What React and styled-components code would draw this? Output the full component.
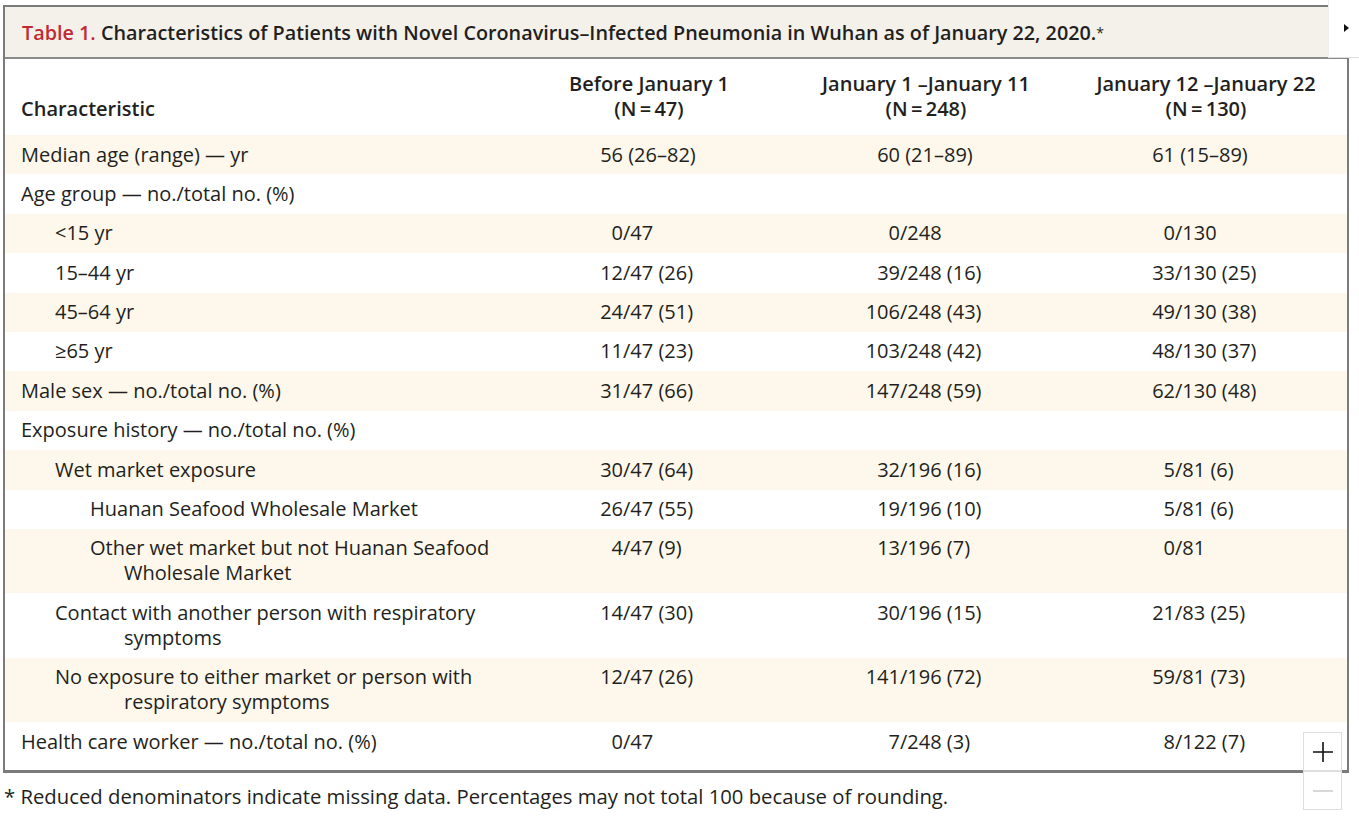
import React from "react";
import styled, { createGlobalStyle } from "styled-components";

const Global = createGlobalStyle`
  html, body { margin: 0; padding: 0; background: #ffffff; }
  body { font-family: "Open Sans", "Noto Sans", sans-serif; color: #231f20; }
`;

const Page = styled.div`
  position: relative;
  width: 1359px;
  height: 818px;
  overflow: hidden;
  padding: 5px 0 0 3px;
  box-sizing: border-box;
`;

const Frame = styled.div`
  width: 1346px;
  box-sizing: border-box;
  border: 2px solid #7b7b7b;
  border-bottom-width: 3px;
  background: #fff;
  padding-bottom: 9px;
`;

const TitleBar = styled.div`
  height: 50px;
  background: #f4f1eb;
  border-bottom: 2px solid #8a8a8a;
  display: flex;
  align-items: center;
  padding-left: 17px;
  font-size: 19.8px;
  font-weight: 600;
  white-space: nowrap;
`;

const Red = styled.span`
  color: #c22a32;
`;

const Star = styled.span`
  font-size: 14px;
  vertical-align: 5px;
  font-weight: 400;
`;

const Grid = styled.div`
  display: grid;
  grid-template-columns: 512px 264px 290px 270px 1fr;
  font-size: 20px;
  line-height: 25px;
`;

const Row = styled.div`
  display: contents;
`;

const Cell = styled.div`
  background: ${(p) => (p.$stripe ? "#fdf8eb" : "#ffffff")};
  padding: 6.5px 0 7.9px;
  white-space: nowrap;
`;

const HeadCell = styled.div`
  padding: 12px 0 14px;
  display: flex;
  flex-direction: column;
  justify-content: flex-end;
  align-items: ${(p) => (p.$left ? "flex-start" : "center")};
  padding-left: ${(p) => (p.$left ? "16px" : "0")};
  font-weight: 600;
  white-space: nowrap;
`;

const Label = styled(Cell)`
  padding-left: ${(p) => p.$hang}px;
  text-indent: ${(p) => p.$indent - p.$hang}px;
`;

const ValueCell = styled(Cell)`
  display: flex;
  align-items: flex-start;
  padding-left: ${(p) => p.$lead}px;
`;

const Num = styled.span`
  width: 40px;
  text-align: right;
  flex: none;
`;

const Rest = styled.span`
  white-space: pre;
`;

const Footnote = styled.div`
  margin-top: 11px;
  padding-left: 1px;
  font-size: 20.3px;
  line-height: 25px;
  white-space: nowrap;
`;

const SidePanel = styled.div`
  position: absolute;
  top: 0;
  right: 0;
  width: 30px;
  height: 57px;
  background: #fff;
  border-bottom: 1px solid #dcdcdc;
  border-left: 1px solid #f0f0f0;
`;

const Arrow = styled.div`
  position: absolute;
  left: 15px;
  top: 24px;
  width: 0;
  height: 0;
  border-top: 4px solid transparent;
  border-bottom: 4px solid transparent;
  border-left: 5px solid #111;
`;

const ZoomBox = styled.div`
  position: absolute;
  left: 1303px;
  top: ${(p) => p.$top}px;
  width: 39px;
  height: 39px;
  box-sizing: border-box;
  background: #fff;
  border: 1px solid #dedede;
  display: flex;
  align-items: center;
  justify-content: center;
`;

const leads = [66, 79, 64];

const rows = [
  { label: ["Median age (range) — yr"], lvl: 0, vals: ["56 (26–82)", "60 (21–89)", "61 (15–89)"] },
  { label: ["Age group — no./total no. (%)"], lvl: 0, vals: ["", "", ""] },
  { label: ["<15 yr"], lvl: 1, vals: ["0/47", "0/248", "0/130"] },
  { label: ["15–44 yr"], lvl: 1, vals: ["12/47 (26)", "39/248 (16)", "33/130 (25)"] },
  { label: ["45–64 yr"], lvl: 1, vals: ["24/47 (51)", "106/248 (43)", "49/130 (38)"] },
  { label: ["≥65 yr"], lvl: 1, vals: ["11/47 (23)", "103/248 (42)", "48/130 (37)"] },
  { label: ["Male sex — no./total no. (%)"], lvl: 0, vals: ["31/47 (66)", "147/248 (59)", "62/130 (48)"] },
  { label: ["Exposure history — no./total no. (%)"], lvl: 0, vals: ["", "", ""] },
  { label: ["Wet market exposure"], lvl: 1, vals: ["30/47 (64)", "32/196 (16)", "5/81 (6)"] },
  { label: ["Huanan Seafood Wholesale Market"], lvl: 2, vals: ["26/47 (55)", "19/196 (10)", "5/81 (6)"] },
  { label: ["Other wet market but not Huanan Seafood", "Wholesale Market"], lvl: 2, vals: ["4/47 (9)", "13/196 (7)", "0/81"] },
  { label: ["Contact with another person with respiratory", "symptoms"], lvl: 1, vals: ["14/47 (30)", "30/196 (15)", "21/83 (25)"] },
  { label: ["No exposure to either market or person with", "respiratory symptoms"], lvl: 1, vals: ["12/47 (26)", "141/196 (72)", "59/81 (73)"] },
  { label: ["Health care worker — no./total no. (%)"], lvl: 0, vals: ["0/47", "7/248 (3)", "8/122 (7)"] },
];

const indents = [16, 50, 85];
const HANG = 119;

function split(v) {
  if (!v) return ["", ""];
  const s = v.indexOf("/");
  if (s >= 0) return [v.slice(0, s), v.slice(s)];
  const sp = v.indexOf(" ");
  return [v.slice(0, sp), v.slice(sp)];
}

export default function App() {
  return (
    <Page>
      <Global />
      <Frame>
        <TitleBar>
          <Red>Table 1.</Red>&nbsp;Characteristics of Patients with Novel Coronavirus–Infected Pneumonia in Wuhan as of January 22, 2020.
          <Star>*</Star>
        </TitleBar>
        <Grid>
          <Row>
            <HeadCell $left>Characteristic</HeadCell>
            <HeadCell>
              <span>Before January 1</span>
              <span>(N{"\u2009"}={"\u2009"}47)</span>
            </HeadCell>
            <HeadCell>
              <span>January 1 –January 11</span>
              <span>(N{"\u2009"}={"\u2009"}248)</span>
            </HeadCell>
            <HeadCell>
              <span>January 12 –January 22</span>
              <span>(N{"\u2009"}={"\u2009"}130)</span>
            </HeadCell>
            <HeadCell />
          </Row>
          {rows.map((r, i) => {
            const stripe = i % 2 === 0;
            const ind = indents[r.lvl];
            return (
              <Row key={i}>
                <Label $stripe={stripe} $indent={ind} $hang={r.lvl === 0 ? ind : HANG}>
                  {r.label.map((l, k) => (
                    <React.Fragment key={k}>
                      {k > 0 && <br />}
                      {l}
                    </React.Fragment>
                  ))}
                </Label>
                {r.vals.map((v, j) => {
                  const [n, rest] = split(v);
                  return (
                    <ValueCell key={j} $stripe={stripe} $lead={leads[j]}>
                      <Num>{n}</Num>
                      <Rest>{rest}</Rest>
                    </ValueCell>
                  );
                })}
                <Cell $stripe={stripe} />
              </Row>
            );
          })}
        </Grid>
      </Frame>
      <Footnote>* Reduced denominators indicate missing data. Percentages may not total 100 because of rounding.</Footnote>
      <SidePanel>
        <Arrow />
      </SidePanel>
      <ZoomBox $top={732}>
        <svg width="22" height="22" viewBox="0 0 22 22">
          <path d="M11 1v20M1 11h20" stroke="#111" strokeWidth="1.6" />
        </svg>
      </ZoomBox>
      <ZoomBox $top={771}>
        <svg width="22" height="22" viewBox="0 0 22 22">
          <path d="M1 11h20" stroke="#cfcfcf" strokeWidth="1.6" />
        </svg>
      </ZoomBox>
    </Page>
  );
}
